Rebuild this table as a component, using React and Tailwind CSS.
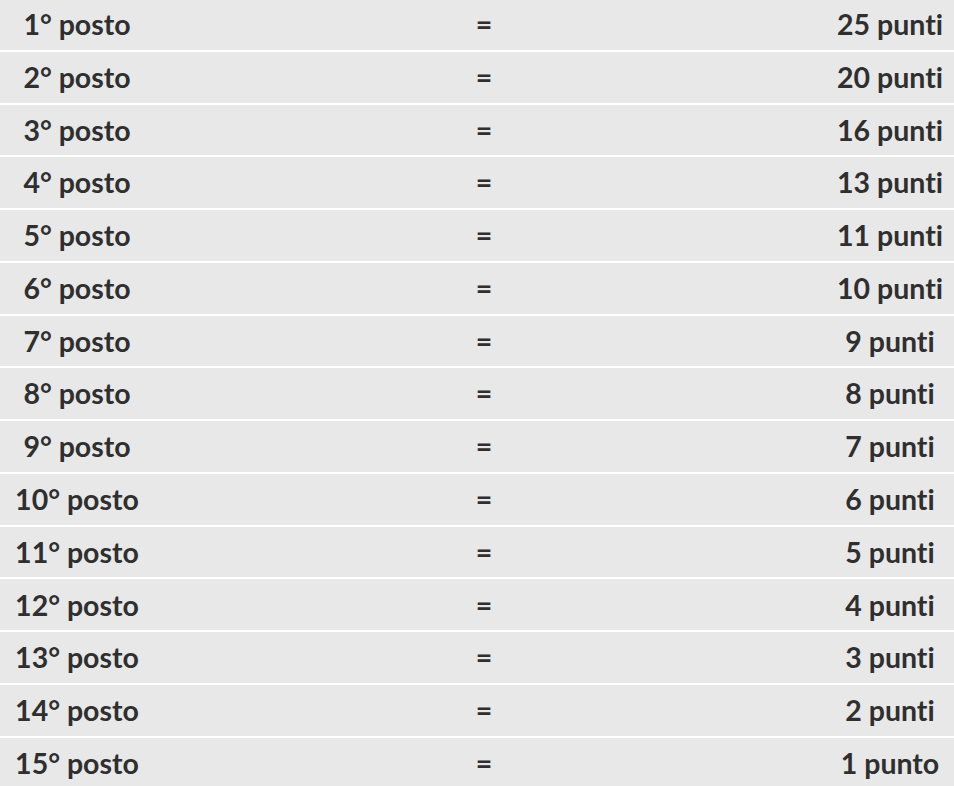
import React from 'react';

const rows = [
  ['1° posto', '25 punti'],
  ['2° posto', '20 punti'],
  ['3° posto', '16 punti'],
  ['4° posto', '13 punti'],
  ['5° posto', '11 punti'],
  ['6° posto', '10 punti'],
  ['7° posto', '9 punti'],
  ['8° posto', '8 punti'],
  ['9° posto', '7 punti'],
  ['10° posto', '6 punti'],
  ['11° posto', '5 punti'],
  ['12° posto', '4 punti'],
  ['13° posto', '3 punti'],
  ['14° posto', '2 punti'],
  ['15° posto', '1 punto'],
];

const App = () => {
  return (
    <div className="w-[954px] h-[786px] overflow-hidden bg-white font-['Lato','Liberation_Sans',sans-serif] text-[#2f2f2f] font-bold text-[28.5px] leading-none [font-variant-ligatures:none]">
      <div className="-mt-[1px]">
        {rows.map(([pos, pts]) => (
          <div
            key={pos}
            className="grid grid-cols-[154px_660px_140px] items-center h-[52.77px] bg-[#e8e8e8] border-b-2 border-white"
          >
            <div className="text-center">{pos}</div>
            <div className="text-center">=</div>
            <div className="text-center pl-3">{pts}</div>
          </div>
        ))}
      </div>
    </div>
  );
};

export default App;
